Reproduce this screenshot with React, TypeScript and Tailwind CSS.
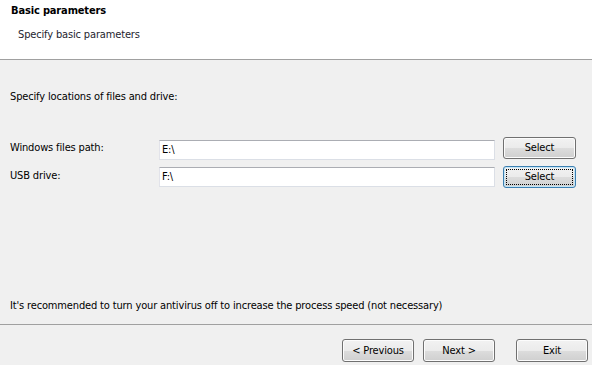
import React from "react"

const font = "font-['Tahoma','DejaVu_Sans_Condensed','DejaVu_Sans',sans-serif] tracking-[-0.15px]"

function WinButton(props: { label: string; focused?: boolean; className?: string }) {
  const { label, focused, className } = props
  return (
    <div
      className={
        "relative flex items-center justify-center rounded-[3px] border text-[11px] leading-[14px] text-black bg-[linear-gradient(to_bottom,#f2f2f2_0%,#ebebeb_50%,#dddddd_50%,#cfcfcf_100%)] " +
        (focused
          ? "border-[#3c7fb1] shadow-[inset_0_0_0_1px_#c4e5f6] "
          : "border-[#707070] shadow-[inset_0_0_0_1px_#fcfcfc] ") +
        (className || "")
      }
    >
      {focused ? <span className="absolute inset-[2px] border border-dotted border-black"></span> : null}
      <span>{label}</span>
    </div>
  )
}

function PathRow(props: { label: string; value: string; focused?: boolean; labelTop: string; inputTop: string; rowTop: string }) {
  const { label, value, focused, labelTop, inputTop, rowTop } = props
  return (
    <div className={"flex items-start " + rowTop}>
      <div className={"w-[159px] pl-[10px] text-[11px] leading-[14px] " + labelTop}>{label}</div>
      <div className={"flex h-[20px] w-[336px] items-center border border-[#dbdfe6] border-t-[#abadb3] border-l-[#e2e3ea] bg-white pl-[2px] text-[11px] leading-[14px] " + inputTop}>
        {value}
      </div>
      <WinButton label="Select" focused={focused} className="ml-[8px] h-[22px] w-[73px]" />
    </div>
  )
}

export default function App() {
  return (
    <div className={"flex h-[365px] w-[592px] flex-col overflow-hidden bg-[#f0f0f0] text-black " + font}>
      <div className="h-[60px] shrink-0 border-b border-[#a0a0a0] bg-white">
        <p className="pl-[11px] pt-[4px] text-[11px] font-bold leading-[14px]">Basic parameters</p>
        <p className="mt-[10px] pl-[18px] text-[11px] leading-[14px] text-[#1e1e2e]">Specify basic parameters</p>
      </div>

      <div className="flex-1">
        <p className="pl-[10px] pt-[30px] text-[11px] leading-[14px]">Specify locations of files and drive:</p>
        <PathRow label="Windows files path:" value="E:\" labelTop="mt-[4px]" inputTop="mt-[3px]" rowTop="mt-[33px]" />
        <PathRow label="USB drive:" value="F:\" focused labelTop="mt-[3px]" inputTop="mt-[1px]" rowTop="mt-[6px]" />
      </div>

      <p className="pb-[11px] pl-[10px] text-[11px] leading-[14px]">
        It's recommended to turn your antivirus off to increase the process speed (not necessary)
      </p>
      <div className="h-[41px] shrink-0 border-t border-[#a0a0a0]">
        <div className="mt-[14px] flex justify-end pr-[4px]">
          <WinButton label="< Previous" className="h-[23px] w-[72px]" />
          <WinButton label="Next >" className="ml-[9px] h-[23px] w-[72px]" />
          <WinButton label="Exit" className="ml-[21px] h-[23px] w-[72px]" />
        </div>
      </div>
    </div>
  )
}
